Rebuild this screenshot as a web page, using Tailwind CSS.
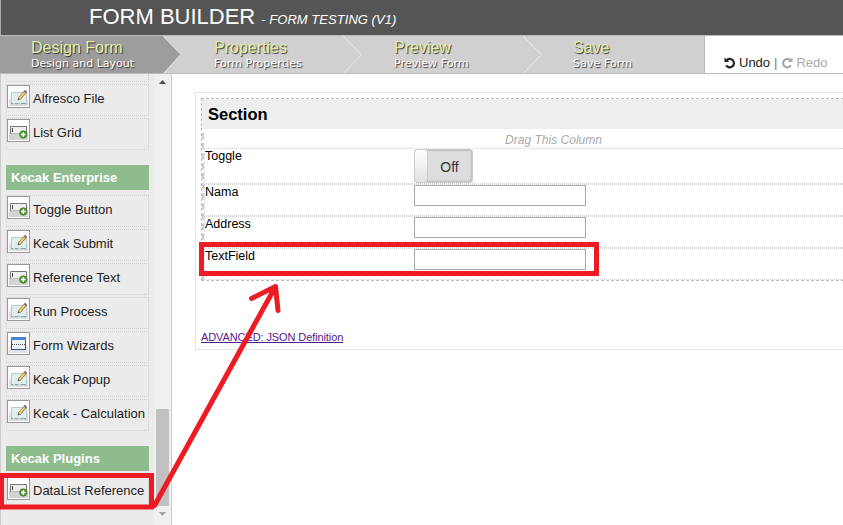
<!DOCTYPE html>
<html lang="en">
<head>
<meta charset="utf-8">
<title>Form Builder</title>
<script src="https://cdn.jsdelivr.net/npm/@tailwindcss/browser@4"></script>
</head>
<body class="relative h-[525px] w-[843px] overflow-hidden bg-white font-['Liberation_Sans',Arial,sans-serif] text-[13px] text-black">
<svg class="hidden" aria-hidden="true">
  <defs>
    <symbol id="edit" viewBox="0 0 23 23">
      <rect x=".5" y=".5" width="22" height="22" fill="#fff" stroke="#999"/>
      <rect x="2" y="14" width="19" height="7" fill="#dedede"/>
      <rect x="2" y="10" width="19" height="4" fill="#f1f1f1"/>
      <path d="M4.500 7.500h15v11l-1.500 1-2-1.500-2 1.500-2-1.500-2 1.500-2-1.500-2 1.500-1.500-1z" fill="#e1edee" stroke="#b5cbce"/>
      <path d="M4 18.500h2m2 0h3m3 0h5" stroke="#86a5b0"/>
      <path d="M12 14l7-8" stroke="#85653d" stroke-width="3.200"/>
      <path d="M12.300 13.600l5.400-6.200" stroke="#f9cf6a" stroke-width="2"/>
      <path d="M17.800 7.200l1.300-1.500" stroke="#987593" stroke-width="2.800"/>
      <path d="M10.600 15.600l.5-2.400 1.900 1.400z" fill="#555"/>
    </symbol>
    <symbol id="field" viewBox="0 0 23 23">
      <rect x=".5" y=".5" width="22" height="22" fill="#fff" stroke="#999"/>
      <rect x="2" y="14" width="19" height="7" fill="#d4d4d4"/>
      <rect x="2" y="10" width="19" height="4" fill="#efefef"/>
      <path d="M3.500 14.500V7.500h16v7z" fill="#f0f0f0" stroke="#777"/>
      <path d="M4 14.500h10" stroke="#bbb"/>
      <path d="M5.500 9v4" stroke="#444"/>
      <circle cx="16.300" cy="15.500" r="3.700" fill="#5b9c3c" stroke="#3b7623" stroke-width=".8"/>
      <path d="M14 15.500h4.600M16.300 13.200v4.600" stroke="#fff" stroke-width="1.400"/>
    </symbol>
    <symbol id="window" viewBox="0 0 23 23">
      <rect x=".5" y=".5" width="22" height="22" fill="#fff" stroke="#999"/>
      <rect x="2" y="14" width="19" height="7" fill="#e2e2e2"/>
      <rect x="4.500" y="5.500" width="14" height="12" fill="#edf3fb" stroke="#345694"/>
      <path d="M4 6.500h15" stroke="#4b83cf" stroke-width="3"/>
      <path d="M5 12.500h14" stroke="#555" stroke-dasharray="1 1"/>
    </symbol>
  </defs>
</svg>

<header class="flex h-[35px] items-baseline border-l border-[#aaa] bg-[#555] pl-[88px] text-white">
  <h1 class="text-[22px] leading-[33px]">FORM BUILDER</h1>
  <span class="ml-[6px] text-[13px] italic tracking-[0.040px]">- FORM TESTING (V1)</span>
</header>

<nav class="flex h-[39px] border-y border-[#bbb] bg-white">
  <div class="relative flex w-[705px] border-r border-[#bbb] bg-[#d0d0d0] text-shadow-[1px_1px_1px_#333]">
    <svg class="absolute left-0 top-0 h-[37px] w-[705px]" viewBox="0 0 705 37" fill="none">
      <path d="M0 0H163L181 18.500 164 37H0z" fill="#9d9d9d"/>
      <path d="M163 0L181 18.500 164 37M343 0L361.500 18.500 344 37M523 0L541.500 18.500 524 37" stroke="#e9e9e9" stroke-width="1"/>
    </svg>
    <div class="relative w-[183px] pl-[31px] pt-[3px]"><div class="text-[16px] leading-[18px] text-[#e2f0aa]">Design Form</div><div class="whitespace-nowrap font-['DejaVu_Sans',Verdana,sans-serif] text-[11px] leading-[13px] text-white">Design and Layout</div></div>
    <div class="relative w-[180px] pl-[31px] pt-[3px]"><div class="text-[16px] leading-[18px] text-[#e2f0aa]">Properties</div><div class="font-['DejaVu_Sans',Verdana,sans-serif] text-[11px] leading-[13px] tracking-[0.080px] text-white">Form Properties</div></div>
    <div class="relative w-[180px] pl-[31px] pt-[3px]"><div class="text-[16px] leading-[18px] text-[#e2f0aa]">Preview</div><div class="font-['DejaVu_Sans',Verdana,sans-serif] text-[11px] leading-[13px] tracking-[0.050px] text-white">Preview Form</div></div>
    <div class="relative w-[160px] pl-[30px] pt-[3px]"><div class="text-[16px] leading-[18px] text-[#e2f0aa]">Save</div><div class="font-['DejaVu_Sans',Verdana,sans-serif] text-[11px] leading-[13px] tracking-[0.080px] text-white">Save Form</div></div>
  </div>
  <div class="flex items-start pl-[19px] pt-[20px] text-[13px] leading-[14px] text-[#222]">
    <svg class="mt-[1px] h-[12px] w-[12px]" viewBox="0 0 12 12" fill="none"><path d="M2.500 3.500A4.200 4.200 0 1 1 2.200 8.400" stroke="#222" stroke-width="2.200"/><path d="M.5 .5V5h4.800z" fill="#222"/></svg>
    <span class="ml-[3px]">Undo</span><span class="mx-[4px] text-[#777]">|</span>
    <svg class="mt-[1px] h-[12px] w-[12px]" viewBox="0 0 12 12" fill="none"><path d="M9.500 3.500A4.200 4.200 0 1 0 9.800 8.400" stroke="#aaa" stroke-width="2.200"/><path d="M11.500 .5V5H6.700z" fill="#aaa"/></svg>
    <span class="ml-[3px] text-[#aaa]">Redo</span>
  </div>
</nav>

<div class="flex h-[451px]">
  <aside class="flex w-[172px] shrink-0 border-x border-[#ccc] bg-[#ebebeb]">
    <div class="w-[153px] pl-[5px] text-[#222]">
      <div class="h-[8px] w-[143px] border-x border-b border-dotted border-[#d0d0d0]"></div>
      <ul class="mt-[2px] flex w-[143px] flex-col gap-[2px]">
        <li class="flex h-[32px] border border-dotted border-[#d0d0d0]"><svg class="size-[23px]"><use href="#edit"/></svg><span class="ml-[3px] whitespace-nowrap leading-[27px]">Alfresco File</span></li>
        <li class="flex h-[32px] border border-dotted border-[#d0d0d0]"><svg class="size-[23px]"><use href="#field"/></svg><span class="ml-[3px] whitespace-nowrap leading-[27px]">List Grid</span></li>
      </ul>
      <h2 class="mt-[15px] h-[25px] w-[143px] bg-[#8fbc8f] pl-[5px] text-[13px] font-bold leading-[25px] text-white">Kecak Enterprise</h2>
      <ul class="mt-[5px] flex w-[143px] flex-col gap-[2px]">
        <li class="flex h-[32px] border border-dotted border-[#d0d0d0]"><svg class="size-[23px]"><use href="#field"/></svg><span class="ml-[3px] whitespace-nowrap leading-[27px]">Toggle Button</span></li>
        <li class="flex h-[32px] border border-dotted border-[#d0d0d0]"><svg class="size-[23px]"><use href="#edit"/></svg><span class="ml-[3px] whitespace-nowrap leading-[27px]">Kecak Submit</span></li>
        <li class="flex h-[32px] border border-dotted border-[#d0d0d0]"><svg class="size-[23px]"><use href="#field"/></svg><span class="ml-[3px] whitespace-nowrap leading-[27px]">Reference Text</span></li>
        <li class="flex h-[32px] border border-dotted border-[#d0d0d0]"><svg class="size-[23px]"><use href="#edit"/></svg><span class="ml-[3px] whitespace-nowrap leading-[27px]">Run Process</span></li>
        <li class="flex h-[32px] border border-dotted border-[#d0d0d0]"><svg class="size-[23px]"><use href="#window"/></svg><span class="ml-[3px] whitespace-nowrap leading-[27px]">Form Wizards</span></li>
        <li class="flex h-[32px] border border-dotted border-[#d0d0d0]"><svg class="size-[23px]"><use href="#edit"/></svg><span class="ml-[3px] whitespace-nowrap leading-[27px]">Kecak Popup</span></li>
        <li class="flex h-[32px] border border-dotted border-[#d0d0d0]"><svg class="size-[23px]"><use href="#edit"/></svg><span class="ml-[3px] whitespace-nowrap leading-[27px]">Kecak - Calculation</span></li>
      </ul>
      <h2 class="mt-[15px] h-[25px] w-[143px] bg-[#8fbc8f] pl-[5px] text-[13px] font-bold leading-[25px] text-white">Kecak Plugins</h2>
      <ul class="mt-[5px] w-[143px]">
        <li class="flex h-[32px] border border-dotted border-[#d0d0d0]"><svg class="size-[23px]"><use href="#field"/></svg><span class="ml-[3px] whitespace-nowrap leading-[27px]">DataList Reference</span></li>
      </ul>
    </div>
    <div class="flex w-[17px] flex-col items-center bg-[#f0f0f0]">
      <svg class="mt-[6px] h-[4px] w-[7px]" viewBox="0 0 7 4"><path d="M0 4L3.500 0 7 4z" fill="#505050"/></svg>
      <div class="mt-[325px] h-[97px] w-[13px] bg-[#c1c1c1]"></div>
      <svg class="mt-[6px] h-[4px] w-[7px]" viewBox="0 0 7 4"><path d="M0 0L3.500 4 7 0z" fill="#a3a3a3"/></svg>
    </div>
  </aside>

  <main class="grow pl-[23px] pt-[18px]">
    <div class="h-[258px] w-[660px] border border-[#e4e4e4] pl-[5px] pt-[5px]">
      <section class="h-[183px] border border-dashed border-[#bbb]">
        <h3 class="h-[30px] bg-[#eee] pl-[6px] text-[16.500px] font-bold leading-[30px]">Section</h3>
        <div class="mt-[4px] h-[147px] border-l-2 border-dashed border-[#ccc]">
          <div class="h-[15px] pl-[301px] text-[12px] italic leading-[15px] tracking-[0.020px] text-[#aaa]">Drag This Column</div>
          <div class="flex h-[36px] border border-dotted border-[#d4d4d4]">
            <label class="w-[209px] text-[12.500px] leading-[15px]">Toggle</label>
            <div class="flex h-[34px] w-[59px] rounded-[3px] border border-[#ccc] bg-[#ddd] shadow-[inset_-1px_-1px_2px_#bbb,inset_0_1px_1px_#bbb]">
              <span class="w-[13px] rounded-[3px] border-r border-[#ccc] bg-linear-to-b from-white to-[#e2e2e2]"></span>
              <span class="grow pr-px text-center text-[14px] leading-[34px] text-[#333]">Off</span>
            </div>
          </div>
          <div class="flex h-[32px] border border-dotted border-[#d4d4d4]"><label class="w-[209px] text-[12.500px] leading-[15px]">Nama</label><div class="h-[21px] w-[172px] border border-[#a9a9a9] bg-white"></div></div>
          <div class="flex h-[32px] border border-dotted border-[#d4d4d4]"><label class="w-[209px] text-[12.500px] leading-[15px]">Address</label><div class="h-[21px] w-[172px] border border-[#a9a9a9] bg-white"></div></div>
          <div class="flex h-[32px] border border-dotted border-[#d4d4d4]"><label class="w-[209px] text-[12.500px] leading-[15px]">TextField</label><div class="h-[21px] w-[172px] border border-[#a9a9a9] bg-white"></div></div>
        </div>
      </section>
      <a class="mt-[49px] block text-[11px] leading-[14px] tracking-[-0.100px] text-[#551a8b] underline">ADVANCED: JSON Definition</a>
    </div>
  </main>
</div>

<!-- Callout linking the palette entry to its field -->
<svg class="pointer-events-none absolute left-0 top-0 h-[525px] w-[843px]" viewBox="0 0 843 525" fill="none" stroke="#ed1c24" stroke-width="5">
  <rect x="1.500" y="475.500" width="150" height="31.500"/>
  <rect x="201.500" y="244.500" width="395" height="29"/>
  <path d="M154.500 505.500L275.500 286.500M251.500 298.500L275.500 286.500 278 310.500" stroke-linecap="round" stroke-linejoin="round"/>
</svg>
</body>
</html>
